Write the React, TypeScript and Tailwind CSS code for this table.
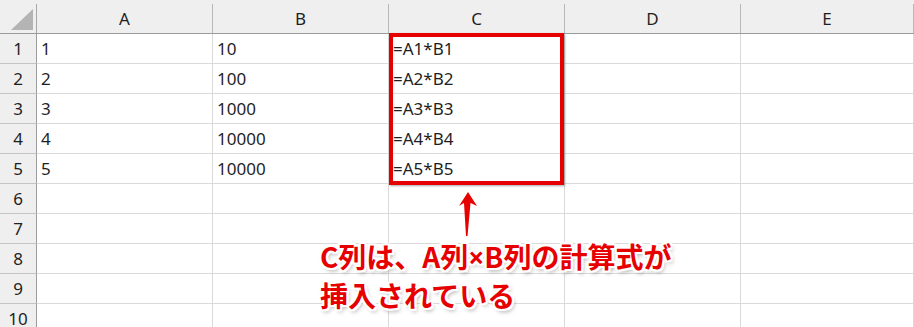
const columns = ["A", "B", "C", "D", "E"];

const rows: string[][] = [
  ["1", "10", "=A1*B1"],
  ["2", "100", "=A2*B2"],
  ["3", "1000", "=A3*B3"],
  ["4", "10000", "=A4*B4"],
  ["5", "10000", "=A5*B5"],
  [],
  [],
  [],
  [],
  [],
];

const gridCols = "grid grid-cols-[37px_176px_176px_176px_176px_1fr]";

const App = () => {
  return (
    <div className="relative w-[914px] h-[327px] overflow-hidden bg-white text-[#1f1f1f] font-['Noto_Sans','Noto_Sans_CJK_JP',sans-serif] text-[17px]">
      {/* column header */}
      <div className={`${gridCols} h-[34px] bg-[#efefef] border-b border-[#9c9c9c]`}>
        <div className="pt-1">
          <div className="h-full border-r border-[#a8a8a8] flex items-end justify-end pr-[3px] pb-[3px]">
            <svg width="22" height="21" viewBox="0 0 22 21">
              <polygon points="22,0 22,21 0,21" fill="#b4b4b4" />
            </svg>
          </div>
        </div>
        {columns.map((c) => (
          <div key={c} className="pt-1">
            <div className="h-full border-r border-[#b8b8b8] flex items-center justify-center">
              {c}
            </div>
          </div>
        ))}
      </div>

      {/* rows */}
      {rows.map((cells, i) => (
        <div key={i} className={`${gridCols} h-[30px]`}>
          <div className="bg-[#efefef] border-r border-b border-r-[#9c9c9c] border-b-[#c4c4c4] flex items-center justify-center">
            {i + 1}
          </div>
          {columns.map((c, j) => (
            <div
              key={c}
              className="border-r border-b border-[#dadada] flex items-center pl-1"
            >
              {cells[j] ?? ""}
            </div>
          ))}
        </div>
      ))}

      {/* highlight box around C1:C5 */}
      <div className="absolute left-[389px] top-[33px] w-[175px] h-[152px] border-4 border-[#e60000] shadow-[1px_1px_2px_rgba(0,0,0,0.35)]" />

      {/* arrow */}
      <svg
        className="absolute left-[455px] top-[190px]"
        width="26"
        height="50"
        viewBox="0 0 26 50"
      >
        <path
          d="M13 2 L22 16 Q18 14 15.5 13 L12.5 46 L11 46 L9 13 Q7 14 4 16 Z"
          fill="#e60000"
        />
      </svg>

      {/* callout */}
      <div className="absolute left-[320px] top-[237px] text-[28px] leading-[38px] font-bold text-[#e60000] font-['Noto_Sans_CJK_JP',sans-serif] [text-shadow:2px_0_#fff,-2px_0_#fff,0_2px_#fff,0_-2px_#fff,2px_2px_#fff,-2px_2px_#fff,2px_-2px_#fff,-2px_-2px_#fff,2px_3px_4px_rgba(0,0,0,0.35)]">
        <div>
          C列は、A列<span className="font-['Noto_Sans',sans-serif]">×</span>B列の計算式が
        </div>
        <div>挿入されている</div>
      </div>
    </div>
  );
};

export default App;
